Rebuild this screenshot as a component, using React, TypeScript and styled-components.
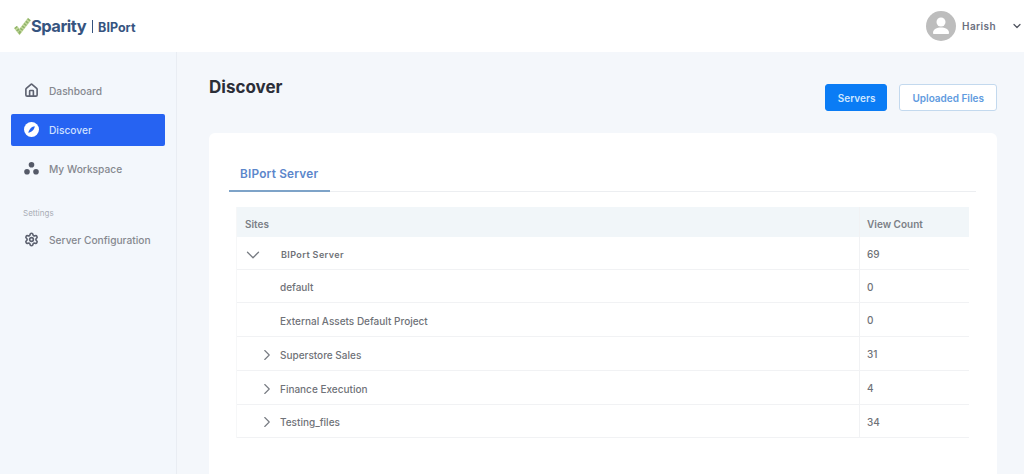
import React from 'react';
import styled, { createGlobalStyle } from 'styled-components';
import { Home, ChevronDown, ChevronRight, Settings } from 'lucide-react';

const GlobalStyle = createGlobalStyle`
  html, body {
    margin: 0;
    padding: 0;
    background: #f4f7fb;
    font-family: 'Inter', 'Liberation Sans', sans-serif;
    overflow: hidden;
  }
`;

const Page = styled.div`
  width: 1024px;
  height: 474px;
  display: flex;
  flex-direction: column;
  overflow: hidden;
`;

const Header = styled.header`
  height: 52px;
  flex: none;
  background: #fff;
  display: flex;
  align-items: center;
  justify-content: space-between;
  padding: 0 0 0 14px;
`;

const Logo = styled.div`
  display: flex;
  align-items: center;
  color: #36547f;
`;

const LogoName = styled.span`
  font-size: 16.5px;
  font-weight: 700;
  letter-spacing: -0.5px;
  margin-left: -1px;
`;

const LogoDivider = styled.span`
  width: 1px;
  height: 13px;
  background: #36547f;
  margin: 1px 5px 0 6px;
`;

const LogoProduct = styled.span`
  font-size: 12.5px;
  font-weight: 700;
  margin-top: 2px;
`;

const User = styled.div`
  display: flex;
  align-items: center;
  color: #6b7080;
  font-size: 10px;
  font-weight: 600;
  letter-spacing: 0.4px;
`;

const UserName = styled.span`
  margin: 0 15px 0 6px;
`;

const UserCaret = styled.span`
  display: flex;
  color: #4f535e;
  margin-right: 1px;
`;

const Body = styled.div`
  flex: 1;
  display: flex;
  min-height: 0;
`;

const Sidebar = styled.aside`
  width: 177px;
  flex: none;
  box-sizing: border-box;
  background: #f3f7fc;
  border-right: 1px solid #e9edf3;
  padding: 23px 11px 0;
  display: flex;
  flex-direction: column;
`;

const NavItem = styled.div<{ $active?: boolean }>`
  height: 32px;
  box-sizing: border-box;
  display: flex;
  align-items: center;
  gap: 10px;
  padding: 0 0 1px 13px;
  margin-bottom: 7px;
  border-radius: 2px;
  font-size: 10.2px;
  font-weight: 500;
  color: ${p => (p.$active ? '#cfe0ff' : '#85888f')};
  background: ${p => (p.$active ? '#2663f2' : 'transparent')};
  svg {
    flex: none;
    width: 15px;
    height: 15px;
    color: ${p => (p.$active ? '#fff' : '#5d6270')};
  }
`;

const NavLabel = styled.div`
  font-size: 8px;
  color: #a9adb6;
  margin: 15px 0 5px 12px;
  height: 12px;
  line-height: 12px;
`;

const Main = styled.main`
  flex: 1;
  min-width: 0;
  padding: 21px 27px 0 32px;
  display: flex;
  flex-direction: column;
`;

const TitleRow = styled.div`
  display: flex;
  justify-content: space-between;
  align-items: flex-start;
  height: 60px;
  flex: none;
`;

const Title = styled.h1`
  margin: 3px 0 0;
  font-size: 17px;
  line-height: 22px;
  font-weight: 700;
  color: #2b2e38;
`;

const Actions = styled.div`
  display: flex;
  gap: 12px;
  margin-top: 11px;
`;

const ActionButton = styled.div<{ $primary?: boolean }>`
  height: 27px;
  box-sizing: border-box;
  padding: ${p => (p.$primary ? '0 11px 0 12px' : '0 12px')};
  display: flex;
  align-items: center;
  border-radius: 3px;
  font-size: 10px;
  font-weight: 600;
  color: ${p => (p.$primary ? '#cfe6ff' : '#5f9be0')};
  background: ${p => (p.$primary ? '#0a7cf5' : '#fff')};
  border: 1px solid ${p => (p.$primary ? '#0a7cf5' : '#c3d9ee')};
`;

const Card = styled.section`
  flex: 1;
  background: #fff;
  border-radius: 6px 6px 0 0;
  padding: 23px 21px 0 20px;
`;

const Tabs = styled.div`
  height: 35px;
  border-bottom: 1px solid #eceef1;
  display: flex;
`;

const Tab = styled.div`
  width: 101px;
  height: 36px;
  box-sizing: border-box;
  border-bottom: 2px solid #7ea3c8;
  padding-left: 11px;
  font-size: 11.8px;
  line-height: 37px;
  font-weight: 600;
  letter-spacing: 0.2px;
  color: #5b86cb;
`;

const Table = styled.div`
  margin: 15px 7px 0 7px;
  border-left: 1px solid #f6f7f8;
`;

const Row = styled.div<{ $head?: boolean; $h: number }>`
  display: grid;
  grid-template-columns: 622px 1fr;
  height: ${p => p.$h}px;
  box-sizing: border-box;
  background: ${p => (p.$head ? '#f1f6f9' : '#fff')};
  border-bottom: ${p => (p.$head ? 'none' : '1px solid #f1f2f4')};
  font-size: 10px;
  font-weight: ${p => (p.$head ? 600 : 500)};
  color: ${p => (p.$head ? '#7b7f86' : '#6f7278')};
`;

const SiteCell = styled.div<{ $bold?: boolean }>`
  display: flex;
  align-items: center;
  padding: ${p => (p.$bold ? '3px' : '2px')} 0 0 8px;
  font-size: ${p => (p.$bold ? '9px' : 'inherit')};
  font-weight: ${p => (p.$bold ? 600 : 'inherit')};
  letter-spacing: ${p => (p.$bold ? '0.4px' : '0')};
`;

const HeadSiteCell = styled(SiteCell)`
  padding-top: 3px;
`;

const RootToggle = styled.span`
  display: flex;
  width: 39px;
  margin-left: -3px;
  flex: none;
  color: #777b82;
`;

const Toggle = styled.span`
  display: flex;
  justify-content: flex-end;
  width: 31px;
  margin-right: 4px;
  flex: none;
  color: #777b82;
`;

const Indent = styled.span`
  width: 35px;
  flex: none;
`;

const CountCell = styled.div`
  display: flex;
  align-items: center;
  padding: 1px 0 0 7px;
  border-left: 1px solid #f1f2f4;
`;

const HeadCountCell = styled(CountCell)`
  padding-top: 3px;
`;

const LogoMark = () => (
  <svg width="18" height="20" viewBox="0 0 18 20" fill="none" strokeLinecap="butt">
    <path d="M1.500 11l4 5L15.500 3" stroke="#c3d89b" strokeWidth="4" />
    <path d="M1.500 11l4 5L15.500 3" stroke="#8fb36a" strokeWidth="3" strokeDasharray="1.500 1.500" />
  </svg>
);

const Avatar = () => (
  <svg width="30" height="30" viewBox="0 0 30 30">
    <circle cx="15" cy="15" r="15" fill="#bdbdbd" />
    <circle cx="15" cy="11" r="4.500" fill="#fff" />
    <path d="M7 22c0-4 4-5.500 8-5.500s8 1.500 8 5.500c0 .8-.5 1-1 1H8c-.5 0-1-.2-1-1z" fill="#fff" />
  </svg>
);

const CompassIcon = () => (
  <svg viewBox="0 0 16 16">
    <circle cx="8" cy="8" r="8" fill="#fff" />
    <path d="M11.500 4.500C8.500 5 5.800 6.800 4.500 11.500 8 10.800 10.700 8.800 11.500 4.500z" fill="#2663f2" />
  </svg>
);

const WorkspaceIcon = () => (
  <svg viewBox="0 0 16 16" fill="#555a68">
    <circle cx="8" cy="4" r="3" />
    <circle cx="3.200" cy="11.500" r="3" />
    <circle cx="12.800" cy="11.500" r="3" />
  </svg>
);

const siteRows = [
  { name: 'default', count: '0', h: 33 },
  { name: 'External Assets Default Project', count: '0', h: 34 },
  { name: 'Superstore Sales', count: '31', h: 34, folder: true },
  { name: 'Finance Execution', count: '4', h: 34, folder: true },
  { name: 'Testing_files', count: '34', h: 33, folder: true },
];

const App: React.FC = () => (
  <Page>
    <GlobalStyle />
    <Header>
      <Logo>
        <LogoMark />
        <LogoName>Sparity</LogoName>
        <LogoDivider />
        <LogoProduct>BIPort</LogoProduct>
      </Logo>
      <User>
        <Avatar />
        <UserName>Harish</UserName>
        <UserCaret>
          <ChevronDown size={12} strokeWidth={2.4} />
        </UserCaret>
      </User>
    </Header>
    <Body>
      <Sidebar>
        <NavItem>
          <Home strokeWidth={2.6} />
          Dashboard
        </NavItem>
        <NavItem $active>
          <CompassIcon />
          Discover
        </NavItem>
        <NavItem>
          <WorkspaceIcon />
          My Workspace
        </NavItem>
        <NavLabel>Settings</NavLabel>
        <NavItem>
          <Settings strokeWidth={2.6} />
          Server Configuration
        </NavItem>
      </Sidebar>
      <Main>
        <TitleRow>
          <Title>Discover</Title>
          <Actions>
            <ActionButton $primary>Servers</ActionButton>
            <ActionButton>Uploaded Files</ActionButton>
          </Actions>
        </TitleRow>
        <Card>
          <Tabs>
            <Tab>BIPort Server</Tab>
          </Tabs>
          <Table>
            <Row $head $h={30}>
              <HeadSiteCell>Sites</HeadSiteCell>
              <HeadCountCell>View Count</HeadCountCell>
            </Row>
            <Row $h={33}>
              <SiteCell $bold>
                <RootToggle>
                  <ChevronDown size={22} strokeWidth={1.4} />
                </RootToggle>
                BIPort Server
              </SiteCell>
              <CountCell>69</CountCell>
            </Row>
            {siteRows.map(row => (
              <Row key={row.name} $h={row.h}>
                <SiteCell>
                  {row.folder ? (
                    <Toggle>
                      <ChevronRight size={18} strokeWidth={1.5} />
                    </Toggle>
                  ) : (
                    <Indent />
                  )}
                  {row.name}
                </SiteCell>
                <CountCell>{row.count}</CountCell>
              </Row>
            ))}
          </Table>
        </Card>
      </Main>
    </Body>
  </Page>
);

export default App;
